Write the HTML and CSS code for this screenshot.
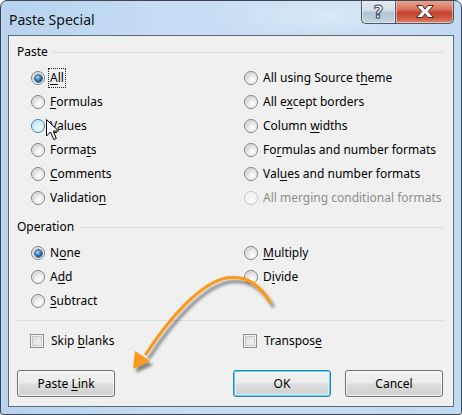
FILE: index.html
```html
<!DOCTYPE html>
<html>
<head>
<meta charset="utf-8">
<title>Paste Special</title>
<link rel="stylesheet" href="styles.css">
</head>
<body>
<div class="window">
  <div class="titlebar">
    <div class="title">Paste Special</div>
    <div class="caption">
      <div class="cbtn help"><span class="qmark">?</span></div>
      <div class="cbtn close">
        <svg width="22" height="15" viewBox="0 0 22 15"><path d="M2.5 1.5 H8.2 L11 5.2 L13.8 1.5 H19.5 L14.2 7.5 L19.5 13.5 H13.8 L11 9.8 L8.2 13.5 H2.5 L7.8 7.5 Z" fill="#fff" stroke="#4a2a25" stroke-width="1" stroke-linejoin="round"/></svg>
      </div>
    </div>
  </div>
  <div class="client">
    <div class="group-head"><span>Paste</span><i></i></div>
    <div class="grid paste-grid">
      <div class="opt"><b class="radio checked"></b><span class="focus"><u>A</u>ll</span></div>
      <div class="opt"><b class="radio"></b><span><u>F</u>ormulas</span></div>
      <div class="opt"><b class="radio hover"></b><span><u>V</u>alues</span></div>
      <div class="opt"><b class="radio"></b><span>Forma<u>t</u>s</span></div>
      <div class="opt"><b class="radio"></b><span><u>C</u>omments</span></div>
      <div class="opt"><b class="radio"></b><span>Validatio<u>n</u></span></div>
      <div class="opt"><b class="radio"></b><span>All using Source t<u>h</u>eme</span></div>
      <div class="opt"><b class="radio"></b><span>All e<u>x</u>cept borders</span></div>
      <div class="opt"><b class="radio"></b><span>Column <u>w</u>idths</span></div>
      <div class="opt"><b class="radio"></b><span>Fo<u>r</u>mulas and number formats</span></div>
      <div class="opt"><b class="radio"></b><span>Val<u>u</u>es and number formats</span></div>
      <div class="opt disabled"><b class="radio"></b><span>All merging conditional formats</span></div>
    </div>
    <div class="group-head op-head"><span>Operation</span><i></i></div>
    <div class="grid op-grid">
      <div class="opt"><b class="radio checked"></b><span>N<u>o</u>ne</span></div>
      <div class="opt"><b class="radio"></b><span>A<u>d</u>d</span></div>
      <div class="opt"><b class="radio"></b><span><u>S</u>ubtract</span></div>
      <div class="opt"><b class="radio"></b><span><u>M</u>ultiply</span></div>
      <div class="opt"><b class="radio"></b><span>D<u>i</u>vide</span></div>
    </div>
    <div class="sep"></div>
    <div class="grid check-grid">
      <div class="opt"><b class="check"></b><span>Skip <u>b</u>lanks</span></div>
      <div class="opt"><b class="check"></b><span>Transpos<u>e</u></span></div>
    </div>
    <div class="buttons">
      <div class="btn"><span>Paste <u>L</u>ink</span></div>
      <div class="btn default"><span>OK</span></div>
      <div class="btn"><span>Cancel</span></div>
    </div>
  </div>
  <svg class="overlay" width="462" height="415" viewBox="0 0 462 415">
    <defs>
      <filter id="sh" x="-20%" y="-20%" width="140%" height="140%">
        <feDropShadow dx="3" dy="4" stdDeviation="1.6" flood-color="#000" flood-opacity="0.45"/>
      </filter>
    </defs>
    <g filter="url(#sh)">
      <path d="M270 302 C258 282 243 275 226 278 C202 283 172 314 146 354" fill="none" stroke="#f99a1c" stroke-width="3.2" stroke-linecap="round"/>
      <polygon points="133,369 135,351 150,361" fill="#f99a1c"/>
    </g>
    <path d="M46.5 119.5 V136 L50.5 132 L53.8 139.5 L56.3 138.4 L53.2 131 H58.5 Z" fill="#fff" stroke="#000" stroke-width="1" stroke-linejoin="miter"/>
  </svg>
</div>
</body>
</html>
```
FILE: styles.css
```css
* { box-sizing: border-box; }
html, body { margin: 0; padding: 0; background: #fff; }
body {
  font-family: "Noto Sans", "Open Sans", sans-serif;
  font-size: 12px;
  color: #000;
}
.window {
  position: relative;
  width: 462px;
  height: 415px;
  border: 1px solid #3f4754;
  border-radius: 7px 7px 3px 3px;
  background:
    radial-gradient(ellipse 180px 40px at 330px 15px, rgba(255,255,255,0.35), rgba(255,255,255,0) 70%),
    linear-gradient(to right, #b7d3ef 0%, #c8def4 40%, #c2daf2 100%);
  display: flex;
  flex-direction: column;
  overflow: hidden;
}
.titlebar {
  height: 34px;
  display: flex;
  justify-content: space-between;
  align-items: flex-start;
  flex: none;
}
.title {
  font-size: 14px;
  line-height: 18px;
  padding: 10px 0 0 8px;
  color: #111;
}
.caption {
  display: flex;
  margin-right: 7px;
  margin-top: -1px;
}
.cbtn {
  height: 24px;
  border: 1px solid #4c5866;
  border-top: none;
  display: flex;
  align-items: center;
  justify-content: center;
  box-shadow: inset 0 0 0 1px rgba(255,255,255,0.45);
}
.help {
  width: 34px;
  border-right: none;
  border-radius: 0 0 0 5px;
  background: linear-gradient(to bottom, #e6edf4 0%, #d3dde8 45%, #b4c3d2 55%, #c6d3df 100%);
}
.qmark {
  font-family: "DejaVu Sans", sans-serif;
  font-weight: bold;
  font-size: 17px;
  line-height: 20px;
  color: #fff;
  -webkit-text-stroke: 1px #3e4a57;
}
.close {
  width: 59px;
  border-radius: 0 0 5px 0;
  background: linear-gradient(to bottom, #e9ab9d 0%, #d9715e 40%, #c6402a 55%, #cf5a44 80%, #dc8a77 100%);
}
.client {
  flex: 1;
  margin: 0 7px 7px 7px;
  border: 1px solid #5f6b79;
  background: #f0f0f0;
  padding: 8px 9px 0 8px;
}
.group-head {
  display: flex;
  align-items: center;
  gap: 5px;
  height: 16px;
  line-height: 16px;
}
.group-head i {
  flex: 1;
  height: 1px;
  background: #d5dfe5;
}
.op-head { margin-top: 9px; gap: 6px; }
.grid {
  display: grid;
  grid-template-columns: 213px 1fr;
  grid-auto-flow: column;
  margin-left: 13px;
}
.paste-grid { grid-template-rows: repeat(6, 24px); margin-top: 6px; }
.op-grid { grid-template-rows: repeat(3, 24px); margin-top: 6px; }
.check-grid { grid-template-rows: 24px; margin-top: 8px; margin-left: 14px; }
.opt {
  display: flex;
  align-items: center;
  gap: 5px;
  white-space: nowrap;
}
.opt span { line-height: 16px; }
u { text-underline-offset: 2px; }
.focus {
  outline: 1px dotted #222;
  outline-offset: 1px;
}
.disabled span { color: #8d8d8d; }
.radio {
  display: block;
  position: relative;
  flex: none;
  width: 14px;
  height: 14px;
  margin-left: 1px;
  border-radius: 50%;
  border: 1px solid #828385;
  background: radial-gradient(circle at 62% 66%, #ffffff 0%, #f3f3f3 28%, #d3d3d3 68%, #b3b3b3 100%);
  box-shadow: inset 0 0 0 1px rgba(255,255,255,0.5);
}
.radio.checked::after {
  content: "";
  position: absolute;
  left: 2.5px;
  top: 2.5px;
  width: 7px;
  height: 7px;
  border-radius: 50%;
  background: radial-gradient(circle at 40% 35%, #c4ecff 0%, #4a9ad6 30%, #17568f 65%, #0b3258 100%);
  box-shadow: 0 0 0 0.8px #1b3f66;
}
.radio.hover {
  border-color: #3c7fb1;
  background: radial-gradient(circle at 60% 65%, #f4fbff 0%, #d2eefc 45%, #9cd5f4 100%);
}
.disabled .radio {
  border-color: #c5c6c8;
  background: radial-gradient(circle at 60% 65%, #fbfbfb, #ececec);
}
.check {
  display: block;
  flex: none;
  width: 14px;
  height: 14px;
  margin-left: -1px;
  margin-right: 2px;
  border: 1px solid #8e8f8f;
  background: linear-gradient(135deg, #d6d6d6 0%, #e9e9e9 50%, #f7f7f7 100%);
  box-shadow: inset 0 0 0 1px #f4f4f4, inset 0 0 0 2px #c9c9c9;
}
.sep {
  height: 1px;
  background: #d5dfe5;
  margin-top: 7px;
}
.buttons {
  display: flex;
  margin-top: 17px;
  padding-right: 1px;
}
.btn {
  width: 98px;
  height: 27px;
  border: 1px solid #707070;
  border-radius: 3px;
  background: linear-gradient(to bottom, #f2f2f2 0%, #ebebeb 48%, #dddddd 52%, #cfcfcf 100%);
  box-shadow: inset 0 0 0 1px rgba(255,255,255,0.75);
  display: flex;
  align-items: center;
  justify-content: center;
  line-height: 16px;
  white-space: nowrap;
}
.btn.default {
  margin-left: auto;
  margin-right: 14px;
  border-color: #3c7fb1;
  box-shadow: inset 0 0 0 1px #48d8fb, inset 0 0 0 2px rgba(255,255,255,0.5);
}
.overlay {
  position: absolute;
  left: -1px;
  top: -1px;
  pointer-events: none;
}
```
